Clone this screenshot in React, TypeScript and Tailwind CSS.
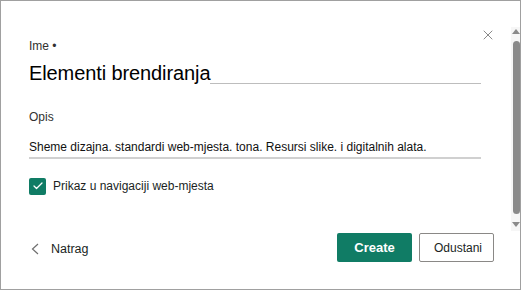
import { Check, X } from 'lucide-react'

export default function App() {
  return (
    <div
      className="relative w-[521px] h-[290px] bg-white border border-[#a0a0a0] overflow-hidden text-[#201f1e]"
      style={{ fontFamily: '"Liberation Sans", Arial, sans-serif' }}
    >
      {/* Close */}
      <button className="absolute left-[479px] top-[26px] text-[#6b6b6b]">
        <X className="w-[16px] h-[16px]" strokeWidth={1.2} />
      </button>

      {/* Scrollbar */}
      <div className="absolute left-[510px] top-[26px] w-[10px] h-[204px] bg-[#f6f6f6] flex flex-col items-center">
        <div className="mt-[2px] w-0 h-0 border-l-[4px] border-r-[4px] border-b-[5px] border-l-transparent border-r-transparent border-b-[#8a8a8a]" />
        <div className="mt-[7px] w-[7px] h-[173px] rounded-[4px] bg-[#8a8a8a]" />
        <div className="mt-[8px] w-0 h-0 border-l-[4px] border-r-[4px] border-t-[5px] border-l-transparent border-r-transparent border-t-[#8a8a8a]" />
      </div>

      {/* Form */}
      <div className="pl-[28px] pr-[39px] pt-[37px]">
        <div className="text-[12px] leading-[16px] text-[#323130]">Ime •</div>

        <div className="mt-[5px] h-[28px] flex items-end">
          <span className="text-[20px] leading-[28px] text-black whitespace-nowrap tracking-[-0.1px]">Elementi brendiranja</span>
          <div className="flex-1 h-px bg-[#bdbdbd] mb-[3px]" />
        </div>

        <div className="mt-[22px] text-[12px] leading-[16px] text-[#323130]">Opis</div>

        <div className="mt-[13px] pb-[1px] border-b-2 border-[#d0d0d0] text-[12px] leading-[18px] text-[#111] whitespace-nowrap">
          Sheme dizajna. standardi web-mjesta. tona. Resursi slike. i digitalnih alata.
        </div>

        <label className="mt-[18px] flex items-center gap-[7px]">
          <span className="w-[17px] h-[17px] rounded-[2px] bg-[#107c65] flex items-center justify-center">
            <Check className="w-[12px] h-[12px] text-white" strokeWidth={2.5} />
          </span>
          <span className="text-[12px] leading-[18px] text-[#201f1e]">Prikaz u navigaciji web-mjesta</span>
        </label>
      </div>

      {/* Footer */}
      <div className="mt-[38px] pl-[30px] pr-[26px] flex items-center">
        <button className="mt-[3px] flex items-center gap-[12px] text-[12.5px] text-[#201f1e]">
          <svg width="8" height="12" viewBox="0 0 8 12" fill="none" stroke="#6f6f6f" strokeWidth="1.2">
            <polyline points="7,1 1.5,6 7,11" />
          </svg>
          <span>Natrag</span>
        </button>
        <div className="flex-1" />
        <button className="w-[75px] h-[29px] rounded-[2px] bg-[#107c65] text-white text-[13px] font-bold">
          Create
        </button>
        <button className="ml-[7px] w-[75px] h-[29px] pl-[3px] rounded-[2px] border border-[#8a8886] bg-white text-[12px] text-[#201f1e]">
          Odustani
        </button>
      </div>
    </div>
  )
}
